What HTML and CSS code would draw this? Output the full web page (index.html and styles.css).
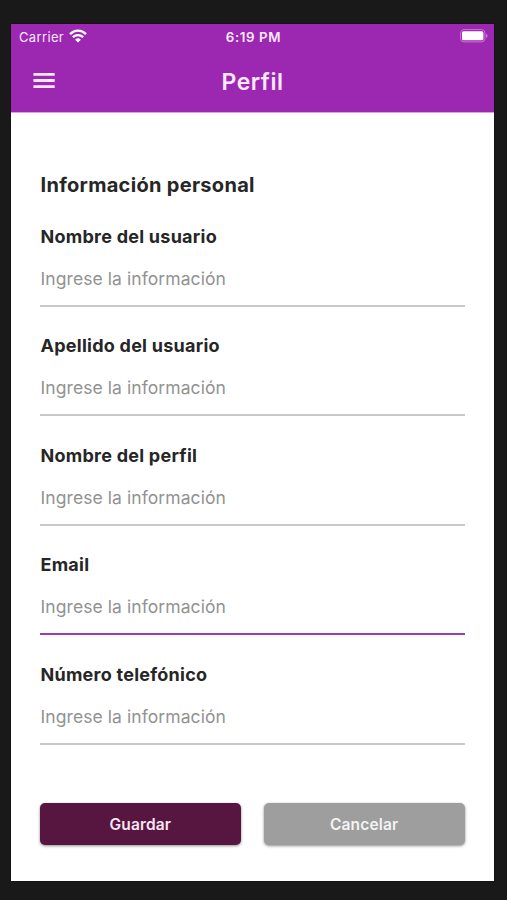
FILE: index.html
```html
<!DOCTYPE html>
<html lang="es">
<head>
<meta charset="utf-8">
<title>Perfil</title>
<link rel="stylesheet" href="styles.css">
</head>
<body>
<div class="screen">
  <header class="header">
    <div class="status">
      <div class="carrier"><span>Carrier</span>
        <svg class="wifi" viewBox="0 0 18 14" width="18" height="14" fill="none" stroke="#fff" stroke-width="2.4"><path d="M1 5.1C5.6 .5 12.4 .5 17 5.1M3.9 8.2c2.9-2.8 7.3-2.8 10.2 0"/><path d="M9 13.6L6.1 10.7a4.1 4.1 0 0 1 5.8 0z" fill="#fff" stroke="none"/></svg>
      </div>
      <span class="time">6:19 PM</span>
      <svg class="battery" viewBox="0 0 28 14" width="28" height="14"><rect x=".6" y=".6" width="24.3" height="12.3" rx="3.4" fill="none" stroke="#c678d0"/><rect x="2" y="2.3" width="21.4" height="9" rx="1.6" fill="#fff"/><path d="M26.1 4.7c1.9.8 1.9 3.4 0 4.2z" fill="#d08bd8"/></svg>
    </div>
    <div class="appbar">
      <svg class="menu" viewBox="0 0 22 16" width="22" height="16" fill="#fbe6fc"><path d="M.4 0h21.3v2.8H.4zM.4 6.1h21.3v2.8H.4zM.4 12.2h21.3V15H.4z"/></svg>
      <h1 class="title">Perfil</h1>
      <span></span>
    </div>
  </header>
  <main class="form">
    <h2 class="section">Información personal</h2>
    <div class="field"><div class="label">Nombre del usuario</div><div class="input">Ingrese la información</div></div>
    <div class="field"><div class="label">Apellido del usuario</div><div class="input">Ingrese la información</div></div>
    <div class="field"><div class="label">Nombre del perfil</div><div class="input">Ingrese la información</div></div>
    <div class="field"><div class="label">Email</div><div class="input focused">Ingrese la información</div></div>
    <div class="field"><div class="label">Número telefónico</div><div class="input">Ingrese la información</div></div>
    <div class="actions">
      <button class="btn save">Guardar</button>
      <button class="btn cancel">Cancelar</button>
    </div>
  </main>
</div>
</body>
</html>
```

FILE: styles.css
```css
* { box-sizing: border-box; }
body { margin: 0; height: 900px; padding: 24px 13px 19px 11px; background: #191919; font-family: Inter, "Liberation Sans", sans-serif; overflow: hidden; }
.screen { height: 857px; background: #fff; box-shadow: 0 0 1px #000; }
.header { height: 89px; background: #9c27b0; border-bottom: 1px solid #d9a3e0; color: #fce9fd; }
.status { height: 25px; padding: 0 6px 0 8px; display: grid; grid-template-columns: 1fr auto 1fr; align-items: center; }
.carrier { display: flex; align-items: center; gap: 5px; font-size: 13px; letter-spacing: .35px; }
.wifi { margin-top: -2px; }
.time { font-size: 13.3px; font-weight: 600; letter-spacing: .6px; }
.battery { justify-self: end; margin-top: -1px; }
.appbar { height: 63px; padding: 0 22px; display: grid; grid-template-columns: 1fr auto 1fr; align-items: center; }
.menu { margin-top: 1px; }
.title { margin: 2px 0 0; font-size: 23px; font-weight: 600; letter-spacing: .5px; }
.form { padding: 56px 29px 0; color: #262626; }
.section { margin: 0 0 24px; height: 32px; line-height: 32px; font-size: 20px; font-weight: 650; letter-spacing: .3px; text-indent: .5px; white-space: nowrap; }
.field { height: 109.4px; }
.label { height: 24px; line-height: 24px; font-size: 18px; font-weight: 650; letter-spacing: .25px; text-indent: .5px; white-space: nowrap; }
.input { height: 58px; padding-top: 18px; line-height: 24px; font-size: 17.5px; letter-spacing: .08px; text-indent: .5px; color: #929292; border-bottom: 2px solid #c9c9c9; white-space: nowrap; }
.focused { border-color: #9b3fac; }
.actions { display: flex; gap: 23px; margin-top: 31px; padding-left: .4px; }
.btn { flex: 1; height: 42px; border: 0; border-radius: 5px; font: 600 15.5px Inter, sans-serif; letter-spacing: .15px; color: #f9e5f5; box-shadow: 0 1px 3px rgba(0,0,0,.45); padding: 1px 1px 0 0; }
.save { background: #57163f; }
.cancel { background: #9e9e9e; color: #f3f3f3; }
```
